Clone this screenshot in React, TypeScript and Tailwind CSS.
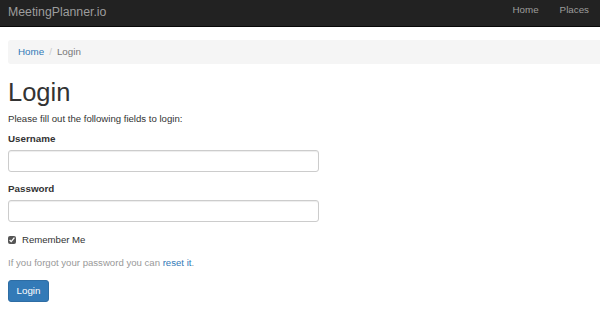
export default function App() {
  return (
    <div className="min-h-[314px] bg-white text-[#333] font-['Liberation_Sans',Arial,sans-serif]">
      {/* Navbar */}
      <nav className="flex h-[27px] items-center justify-between border-b border-[#080808] bg-[#222]">
        <span className="pb-[2px] pl-[8px] text-[12.3px] text-[#9d9d9d]">MeetingPlanner.io</span>
        <ul className="flex gap-[21px] pb-[5px] pr-[11px] text-[9.8px] text-[#9d9d9d]">
          <li>Home</li>
          <li>Places</li>
        </ul>
      </nav>

      <div className="pl-[8px]">
        {/* Breadcrumb */}
        <ol className="mt-[13px] flex h-[24px] items-center rounded-l-[3px] bg-[#f5f5f5] pl-[10px] text-[9.8px]">
          <li className="text-[#337ab7]">Home</li>
          <li className="px-[5px] text-[#ccc]">/</li>
          <li className="text-[#777]">Login</li>
        </ol>

        <h1 className="mt-[12px] h-[32px] text-[25.5px] leading-[32px]">Login</h1>
        <p className="mt-[4px] text-[9.6px] leading-[14px]">Please fill out the following fields to login:</p>

        <div className="w-[311px]">
          <label className="mt-[6px] block text-[9.8px] font-bold leading-[14px]">Username</label>
          <input
            type="text"
            className="mt-[4px] block h-[22px] w-full rounded-[3px] border border-[#ccc] shadow-[inset_0_1px_1px_rgba(0,0,0,0.075)]"
          />

          <label className="mt-[10px] block text-[9.8px] font-bold leading-[14px]">Password</label>
          <input
            type="password"
            className="mt-[4px] block h-[22px] w-full rounded-[3px] border border-[#ccc] shadow-[inset_0_1px_1px_rgba(0,0,0,0.075)]"
          />

          <label className="mt-[11px] flex items-center gap-[6px] text-[9.6px] leading-[14px]">
            <input type="checkbox" defaultChecked className="m-0 h-[8px] w-[8px] accent-[#555]" />
            <span>Remember Me</span>
          </label>

          <p className="mt-[9px] text-[9.6px] leading-[14px] text-[#999]">
            If you forgot your password you can <span className="text-[#337ab7]">reset it</span>.
          </p>

          <button className="mt-[10px] h-[22px] w-[41px] rounded-[3px] border border-[#2e6da4] bg-[#337ab7] text-[9.8px] text-white">
            Login
          </button>
        </div>
      </div>
    </div>
  );
}
